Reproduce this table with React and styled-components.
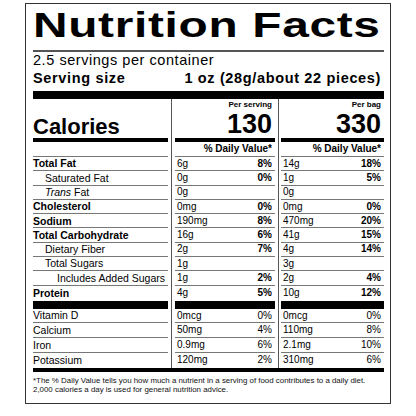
import React from "react";
import styled, { createGlobalStyle } from "styled-components";

const GlobalStyle = createGlobalStyle`
  body {
    margin: 0;
    background: #fff;
    color: #000;
    font-family: "Liberation Sans", Arial, sans-serif;
  }
`;

const Label = styled.div`
  box-sizing: border-box;
  width: 366px;
  margin: 3px 0 0 25px;
  border: 1px solid #333;
  padding: 0 6px 8.6px 7px;
  background: #fff;
`;

const TitleRow = styled.div`
  padding-bottom: 4px;
  border-bottom: 2px solid #555;
  overflow: hidden;
`;

const Title = styled.h1`
  margin: 0;
  font-size: 35px;
  line-height: 42px;
  font-weight: 700;
  letter-spacing: 0.5px;
  white-space: nowrap;
  transform: scaleX(1.366);
  transform-origin: left center;
`;

const Servings = styled.div`
  font-size: 14.5px;
  line-height: 17px;
  letter-spacing: 0.55px;
`;

const ServingSize = styled.div`
  display: flex;
  justify-content: space-between;
  padding: 1px 3px 0 0;
  font-size: 14.5px;
  line-height: 17px;
  font-weight: 700;
  letter-spacing: 0.65px;
`;

const Bar = styled.div`
  height: ${(p) => p.$h}px;
  margin-top: ${(p) => p.$top || 0}px;
  background: #000;
`;

const Columns = styled.div`
  display: flex;
  align-items: stretch;
`;

const Column = styled.div`
  display: flex;
  flex-direction: column;
  width: ${(p) => p.$w || "auto"};
  flex: ${(p) => (p.$w ? "none" : 1)};
`;

const Divider = styled.div`
  width: 1px;
  margin: 0 ${(p) => p.$gap}px;
  background: #555;
`;

const Header = styled.div`
  height: 39px;
  display: flex;
  flex-direction: column;
  justify-content: ${(p) => (p.$left ? "flex-end" : "space-between")};
  align-items: ${(p) => (p.$left ? "flex-start" : "flex-end")};
  padding-right: ${(p) => (p.$left ? 0 : 3)}px;
`;

const Calories = styled.div`
  font-size: 22px;
  line-height: 22px;
  font-weight: 700;
`;

const PerLabel = styled.div`
  padding-top: 1px;
  font-size: 8px;
  line-height: 9px;
  font-weight: 700;
`;

const Big = styled.div`
  font-size: 27px;
  line-height: 27px;
  font-weight: 700;
`;

const Row = styled.div`
  box-sizing: border-box;
  height: ${(p) => p.$h}px;
  border-bottom: ${(p) => (p.$line ? "1px solid #777" : "none")};
  display: flex;
  align-items: center;
  justify-content: ${(p) => (p.$right ? "flex-end" : "space-between")};
  padding: 0 ${(p) => (p.$label ? 0 : 3)}px 0 ${(p) => (p.$label ? p.$indent * 12 : 2)}px;
  font-size: ${(p) => (p.$label ? 10.5 : 10)}px;
  line-height: 1;
  font-weight: ${(p) => (p.$bold ? 700 : 400)};
  white-space: nowrap;
`;

const Pct = styled.span`
  font-weight: ${(p) => (p.$bold ? 700 : 400)};
`;

const Footnote = styled.p`
  margin: 0;
  padding-top: 4.8px;
  font-size: 7.9px;
  line-height: 9px;
  color: #111;
`;

const nutrients = [
  { label: "Total Fat", bold: true, indent: 0, a: ["6g", "8%"], b: ["14g", "18%"] },
  { label: "Saturated Fat", indent: 1, a: ["0g", "0%"], b: ["1g", "5%"] },
  { label: <><i>Trans</i> Fat</>, indent: 1, a: ["0g", ""], b: ["0g", ""] },
  { label: "Cholesterol", bold: true, indent: 0, a: ["0mg", "0%"], b: ["0mg", "0%"] },
  { label: "Sodium", bold: true, indent: 0, a: ["190mg", "8%"], b: ["470mg", "20%"] },
  { label: "Total Carbohydrate", bold: true, indent: 0, a: ["16g", "6%"], b: ["41g", "15%"] },
  { label: "Dietary Fiber", indent: 1, a: ["2g", "7%"], b: ["4g", "14%"] },
  { label: "Total Sugars", indent: 1, a: ["1g", ""], b: ["3g", ""] },
  { label: "Includes Added Sugars", indent: 2, a: ["1g", "2%"], b: ["2g", "4%"] },
];

const protein = { label: "Protein", bold: true, indent: 0, a: ["4g", "5%"], b: ["10g", "12%"] };

const vitamins = [
  { label: "Vitamin D", a: ["0mcg", "0%"], b: ["0mcg", "0%"] },
  { label: "Calcium", a: ["50mg", "4%"], b: ["110mg", "8%"] },
  { label: "Iron", a: ["0.9mg", "6%"], b: ["2.1mg", "10%"] },
  { label: "Potassium", a: ["120mg", "2%"], b: ["310mg", "6%"] },
];

const LabelColumn = () => (
  <Column $w="135px">
    <Header $left>
      <Calories>Calories</Calories>
    </Header>
    <Bar $h={4} />
    <Row $h={15} $line $label $indent={0} />
    {nutrients.map((n, i) => (
      <Row key={i} $h={14.3} $line $label $indent={n.indent} $bold={n.bold}>
        <span>{n.label}</span>
      </Row>
    ))}
    <Row $h={15} $label $indent={0} $bold>
      <span>{protein.label}</span>
    </Row>
    <Bar $h={8} />
    {vitamins.map((v, i) => (
      <Row key={i} $h={i === 3 ? 14.8 : 14.7} $line={i < 3} $label $indent={0}>
        <span>{v.label}</span>
      </Row>
    ))}
  </Column>
);

const ValueColumn = ({ w, per, calories, k }) => (
  <Column $w={w}>
    <Header>
      <PerLabel>{per}</PerLabel>
      <Big>{calories}</Big>
    </Header>
    <Bar $h={4} />
    <Row $h={15} $line $right $bold>
      <span>% Daily Value*</span>
    </Row>
    {[...nutrients, protein].map((n, i) => (
      <Row key={i} $h={i === 9 ? 15 : 14.3} $line={i < 9}>
        <span>{n[k][0]}</span>
        <Pct $bold>{n[k][1]}</Pct>
      </Row>
    ))}
    <Bar $h={8} />
    {vitamins.map((v, i) => (
      <Row key={i} $h={i === 3 ? 14.8 : 14.7} $line={i < 3}>
        <span>{v[k][0]}</span>
        <Pct>{v[k][1]}</Pct>
      </Row>
    ))}
  </Column>
);

export default function App() {
  return (
    <>
      <GlobalStyle />
      <Label>
        <TitleRow>
          <Title>Nutrition Facts</Title>
        </TitleRow>
        <Servings>2.5 servings per container</Servings>
        <ServingSize>
          <span>Serving size</span>
          <span>1 oz (28g/about 22 pieces)</span>
        </ServingSize>
        <Bar $h={8} $top={4} />
        <Columns>
          <LabelColumn />
          <Divider $gap={3} />
          <ValueColumn w="100px" per="Per serving" calories="130" k="a" />
          <Divider $gap={2.5} />
          <ValueColumn per="Per bag" calories="330" k="b" />
        </Columns>
        <Bar $h={4} />
        <Footnote>
          *The % Daily Value tells you how much a nutrient in a serving of food contributes to a daily diet.
          <br />
          2,000 calories a day is used for general nutrition advice.
        </Footnote>
      </Label>
    </>
  );
}
